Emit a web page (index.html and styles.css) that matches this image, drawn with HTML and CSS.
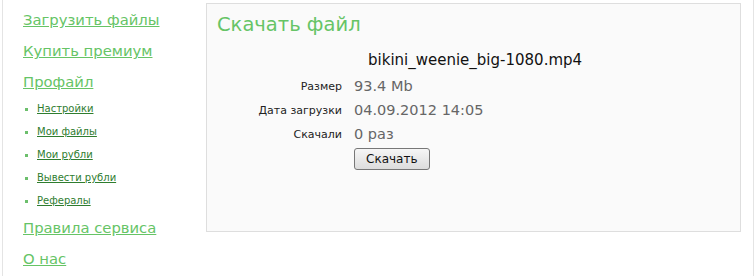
FILE: index.html
```html
<!DOCTYPE html>
<html>
<head>
<meta charset="utf-8">
<link rel="stylesheet" href="styles.css">
</head>
<body>
<div class="page">
  <nav class="side">
    <a class="main-link" href="#">Загрузить файлы</a>
    <a class="main-link" href="#">Купить премиум</a>
    <a class="main-link" href="#">Профайл</a>
    <ul class="sub">
      <li><a href="#">Настройки</a></li>
      <li><a href="#">Мои файлы</a></li>
      <li><a href="#">Мои рубли</a></li>
      <li><a href="#">Вывести рубли</a></li>
      <li><a href="#">Рефералы</a></li>
    </ul>
    <a class="main-link" href="#">Правила сервиса</a>
    <a class="main-link" href="#">О нас</a>
  </nav>
  <main class="panel">
    <h1 class="title">Скачать файл</h1>
    <div class="fname">bikini_weenie_big-1080.mp4</div>
    <div class="info">
      <div class="lbl">Размер</div><div class="val">93.4 Mb</div>
      <div class="lbl">Дата загрузки</div><div class="val">04.09.2012 14:05</div>
      <div class="lbl">Скачали</div><div class="val">0 раз</div>
      <div></div><div><button class="btn">Скачать</button></div>
    </div>
  </main>
</div>
</body>
</html>
```
FILE: styles.css
```css
html, body { margin: 0; padding: 0; background: #fff; }
body { font-family: "DejaVu Sans", Verdana, sans-serif; }
.page {
  display: flex;
  height: 276px;
  margin-left: 2px;
  margin-right: 2px;
  border-left: 1px solid #e4e4e4;
  border-right: 1px solid #e4e4e4;
}
.side {
  width: 203px;
  padding-left: 20px;
  padding-top: 4px;
  display: flex;
  flex-direction: column;
  box-sizing: border-box;
}
.main-link {
  color: #66c466;
  font-size: 14.8px;
  line-height: 31px;
  height: 31px;
}
.sub {
  list-style: none;
  margin: 0;
  padding: 0 0 0 2px;
}
.sub li {
  height: 23px;
  line-height: 23px;
  display: flex;
  align-items: center;
  gap: 9px;
}
.sub li::before {
  content: "";
  width: 3px;
  height: 3px;
  margin-top: 1px;
  background: #6cbf6c;
}
.sub a {
  color: #2f7d2f;
  font-size: 10px;
}
.panel {
  margin-top: 3px;
  width: 535px;
  height: 229px;
  box-sizing: border-box;
  background: #fafafa;
  border: 1px solid #dedede;
  padding: 8px 10px;
}
.title {
  margin: 0;
  font-weight: normal;
  font-size: 19.5px;
  color: #66c466;
  line-height: 26px;
}
.fname {
  margin-top: 13px;
  margin-left: 151px;
  font-size: 15px;
  color: #111;
}
.info {
  display: grid;
  grid-template-columns: 125px auto;
  column-gap: 12px;
  grid-auto-rows: 24px;
  align-items: center;
  margin-top: 5px;
}
.lbl { text-align: right; font-size: 11px; color: #222; }
.val { font-size: 14.5px; color: #666; }
.btn {
  font-family: "DejaVu Sans", sans-serif;
  font-size: 12px;
  padding: 3px 11px;
  margin-top: 2px;
  border: 1px solid #777;
  border-radius: 3px;
  background: linear-gradient(#f6f6f6, #dcdcdc);
  color: #111;
}
```
